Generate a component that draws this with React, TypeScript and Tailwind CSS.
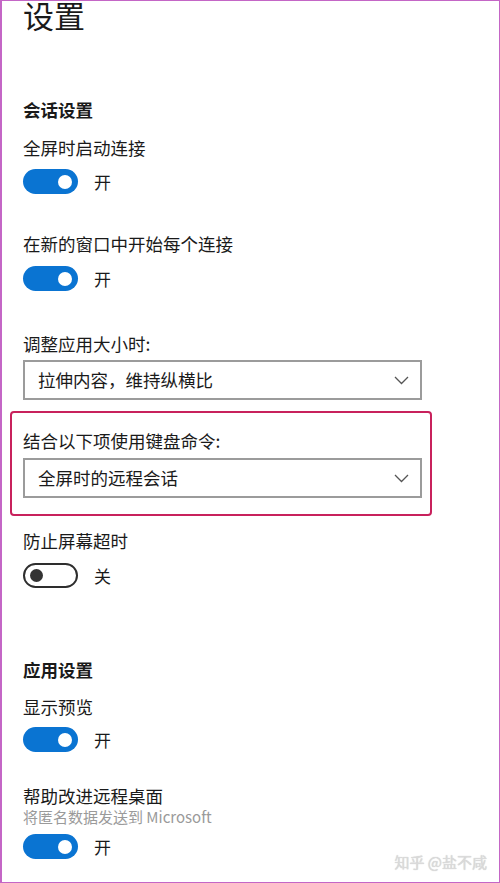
import React from "react";

const font = { fontFamily: '"Noto Sans CJK SC", "Noto Sans", sans-serif' };

function Toggle({ on, label, className = "" }: { on: boolean; label: string; className?: string }) {
  return (
    <div className={`flex items-center h-[25px] ${className}`}>
      {on ? (
        <div className="w-[55px] h-[25px] rounded-full bg-[#0a74d2] flex items-center justify-end pr-[6px]">
          <div className="w-[14px] h-[14px] rounded-full bg-white" />
        </div>
      ) : (
        <div className="w-[55px] h-[25px] rounded-full border-[2.5px] border-[#2e2e2e] flex items-center pl-[5px]">
          <div className="w-[13px] h-[13px] rounded-full bg-[#333]" />
        </div>
      )}
      <span className="ml-[16px] text-[17px] leading-[24px] text-[#1a1a1a]">{label}</span>
    </div>
  );
}

function Label({ children, className = "" }: { children: React.ReactNode; className?: string }) {
  return <div className={`text-[17.5px] leading-[24px] text-[#1a1a1a] ${className}`}>{children}</div>;
}

function Select({ value, className = "" }: { value: string; className?: string }) {
  return (
    <div className={`w-[399px] h-[40px] border-2 border-[#9b9b9b] bg-white flex items-center justify-between pl-[13px] pr-[11px] ${className}`}>
      <span className="text-[17.5px] leading-[24px] text-[#1a1a1a]">{value}</span>
      <svg width="15" height="9" viewBox="0 0 15 9" fill="none">
        <path d="M1 1 L7.5 7.5 L14 1" stroke="#555" strokeWidth="1.3" />
      </svg>
    </div>
  );
}

export default function App() {
  return (
    <div
      className="relative w-[500px] h-[883px] overflow-hidden bg-white border border-[#c466c6] border-l-2"
      style={font}
    >
      <div className="flex flex-col pl-[21px]">
        <div className="-mt-[3px] text-[31px] leading-[34px] text-[#1a1a1a]">设置</div>

        <Label className="mt-[66px] font-bold">会话设置</Label>
        <Label className="mt-[14px]">全屏时启动连接</Label>
        <Toggle on label="开" className="mt-[9px]" />

        <Label className="mt-[38px]">在新的窗口中开始每个连接</Label>
        <Toggle on label="开" className="mt-[10px]" />

        <Label className="mt-[41px]">调整应用大小时:</Label>
        <Select value="拉伸内容，维持纵横比" className="mt-[4px]" />

        <div className="mt-[11px] -ml-[13px] w-[422px] border-2 border-[#c8215c] rounded-[4px] pl-[11px] pt-[16px] pb-[16px]">
          <Label>结合以下项使用键盘命令:</Label>
          <Select value="全屏时的远程会话" className="mt-[5px]" />
        </div>

        <Label className="mt-[13px]">防止屏幕超时</Label>
        <Toggle on={false} label="关" className="mt-[10px]" />

        <Label className="mt-[70px] font-bold">应用设置</Label>
        <Label className="mt-[13px]">显示预览</Label>
        <Toggle on label="开" className="mt-[8px]" />

        <div className="mt-[33px] text-[17.5px] leading-[22px] text-[#1a1a1a]">帮助改进远程桌面</div>
        <div className="text-[15px] leading-[20px] text-[#9a9a9a]">将匿名数据发送到 Microsoft</div>
        <Toggle on label="开" className="mt-[7px]" />
      </div>

      <div className="absolute right-[12px] top-[851px] text-[15px] leading-[20px] text-[#dadada] [text-shadow:0_0_1px_#c4c4c4]">
        知乎 @盐不咸
      </div>
    </div>
  );
}
